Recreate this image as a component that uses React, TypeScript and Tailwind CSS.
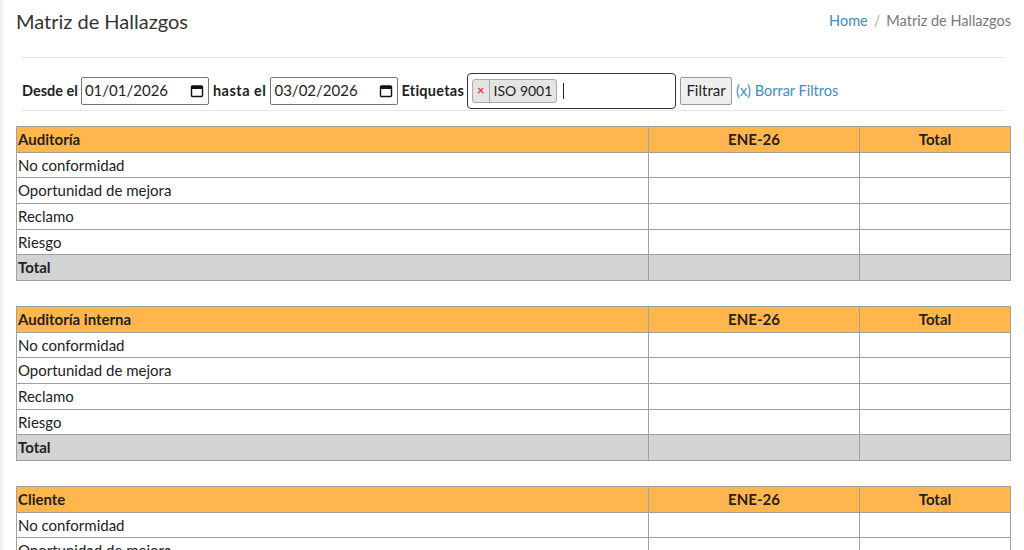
import React from "react";

const sections = ["Auditoría", "Auditoría interna", "Cliente"];
const rows = ["No conformidad", "Oportunidad de mejora", "Reclamo", "Riesgo"];

function CalendarIcon() {
  return (
    <svg width="14" height="14" viewBox="0 0 14 14" className="shrink-0">
      <rect x="1.5" y="2" width="11" height="10.5" rx="1" fill="none" stroke="#111" strokeWidth="1.4" />
      <rect x="1.5" y="2" width="11" height="3" fill="#111" />
    </svg>
  );
}

function DateBox({ value }: { value: string }) {
  return (
    <div className="flex h-[28px] w-[128px] shrink-0 items-center justify-between rounded-[2px] border border-[#767676] bg-white pl-[3px] pr-[4px] text-[15px] text-[#222]">
      <span>{value}</span>
      <CalendarIcon />
    </div>
  );
}

function Matrix({ title }: { title: string }) {
  const cell = "border border-[#a0a0a0] h-[25.67px] px-[1px] py-0";
  return (
    <table className="w-full border-collapse text-[15px] text-[#222]">
      <thead>
        <tr className="bg-[#ffb74d]">
          <th className={`${cell} text-left font-bold`}>{title}</th>
          <th className={`${cell} w-[211px] text-center font-bold`}>ENE-26</th>
          <th className={`${cell} w-[151px] text-center font-bold`}>Total</th>
        </tr>
      </thead>
      <tbody>
        {rows.map((r) => (
          <tr key={r} className="bg-white">
            <td className={cell}>{r}</td>
            <td className={cell}></td>
            <td className={cell}></td>
          </tr>
        ))}
        <tr className="bg-[#d3d3d3]">
          <td className={`${cell} font-bold`}>Total</td>
          <td className={cell}></td>
          <td className={cell}></td>
        </tr>
      </tbody>
    </table>
  );
}

export default function App() {
  return (
    <div className="flex min-h-[550px] bg-white font-['Lato',sans-serif] text-[#333]">
      <div className="w-[6px] shrink-0 bg-gradient-to-r from-[#eeeeee] to-white" />
      <div className="flex-1 pl-[10px] pr-[13px]">
        {/* Header */}
        <div className="flex h-[42px] items-center justify-between">
          <h1 className="text-[20px] text-[#333]">Matriz de Hallazgos</h1>
          <div className="flex items-center gap-[6px] text-[14.5px]">
            <a className="text-[#3c8dbc]">Home</a>
            <span className="text-[#aaa]">/</span>
            <span className="text-[#777]">Matriz de Hallazgos</span>
          </div>
        </div>

        <div className="mx-[6px] mt-[15px] border-t border-[#e5e5e5]" />

        {/* Filters */}
        <div className="mx-[6px] flex h-[52px] items-center pt-[13px] text-[14.5px] text-[#222]">
          <b className="mr-[3px]">Desde el</b>
          <DateBox value="01/01/2026" />
          <b className="ml-[4px] mr-[4px] tracking-[0.5px]">hasta el</b>
          <DateBox value="03/02/2026" />
          <b className="ml-[3px] mr-[3px] tracking-[0.25px]">Etiquetas</b>
          <div className="flex h-[36px] w-[209px] shrink-0 items-center gap-[6px] rounded-[4px] border border-[#333] bg-white px-[4px]">
            <div className="flex h-[24px] items-center rounded-[3px] border border-[#aaa] bg-[#e4e4e4] text-[14px]">
              <span className="flex h-full items-center border-r border-[#aaa] px-[4px] text-[13px] font-bold text-[#e53935]">×</span>
              <span className="px-[4px]">ISO 9001</span>
            </div>
            <span className="h-[16px] w-px bg-[#222]" />
          </div>
          <button className="ml-[4px] h-[28px] w-[52px] rounded-[2px] border border-[#999] bg-[#efefef] text-[15px] text-[#222]">
            Filtrar
          </button>
          <a className="ml-[4px] text-[14.5px] text-[#3c8dbc]">(x) Borrar Filtros</a>
        </div>

        <div className="mx-[6px] border-t border-[#e5e5e5]" />

        {/* Tables */}
        <div className="mt-[15px] flex flex-col gap-[25px]">
          {sections.map((s) => (
            <Matrix key={s} title={s} />
          ))}
        </div>
      </div>
    </div>
  );
}
